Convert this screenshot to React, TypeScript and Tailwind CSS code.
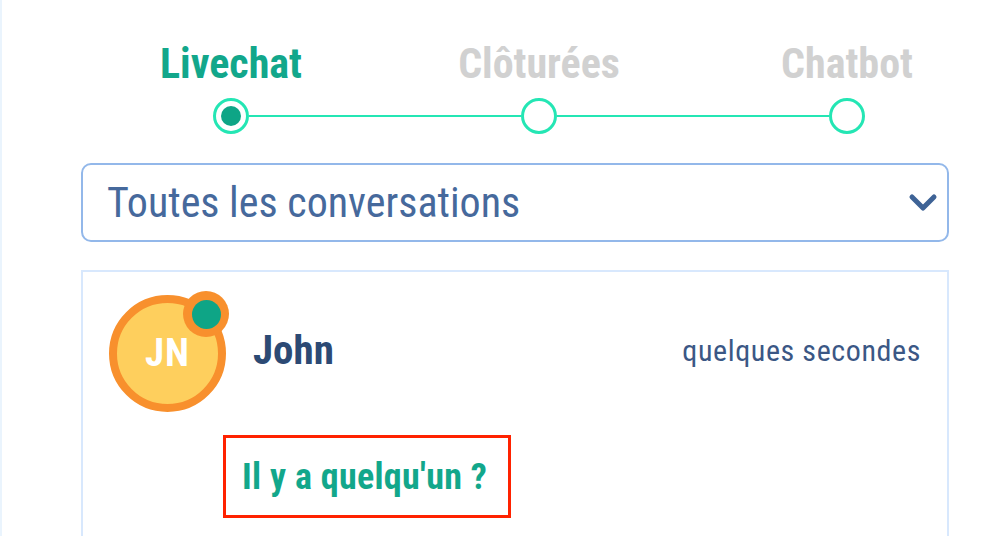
const FONT = "font-['Roboto_Condensed','Roboto',sans-serif] font-stretch-[75%]";

const STEPS = [
  { label: "Livechat", active: true },
  { label: "Clôturées", active: false },
  { label: "Chatbot", active: false },
];

function Step({ label, active }: { label: string; active: boolean }) {
  return (
    <div className="flex w-[36px] flex-col items-center">
      <div
        className={`whitespace-nowrap text-[42px] font-bold leading-[42px] ${
          active ? "text-[#12a78b]" : "text-[#d1d1d1]"
        }`}
      >
        {label}
      </div>
      <div className="mt-[13px] flex h-[36px] w-[36px] items-center justify-center rounded-full border-[3px] border-[#24e6b4] bg-white">
        {active && <div className="h-[20px] w-[20px] rounded-full bg-[#0ea586]" />}
      </div>
    </div>
  );
}

export default function App() {
  return (
    <div className={`h-[536px] w-[998px] overflow-hidden border-l-2 border-[#eaf4fd] bg-white ${FONT}`}>
      <div className="ml-[79px] w-[868px] pt-[43px]">
        <div className="ml-[132px] mr-[84px] flex">
          {STEPS.map((s, i) => (
            <div key={s.label} className={`flex items-end ${i > 0 ? "flex-1" : ""}`}>
              {i > 0 && <div className="mb-[17px] h-[2px] flex-1 bg-[#24e6b4]" />}
              <Step label={s.label} active={s.active} />
            </div>
          ))}
        </div>

        <div className="mt-[29px] flex h-[79px] items-center justify-between rounded-[10px] border-2 border-[#93b8ea] pl-[24px] pr-[9px]">
          <span className="text-[42px] leading-none text-[#46699c]">Toutes les conversations</span>
          <svg width="30" height="20" viewBox="0 0 30 20" fill="none">
            <path d="M4 4 L15 15 L26 4" stroke="#3e6396" strokeWidth="5" strokeLinecap="round" strokeLinejoin="round" />
          </svg>
        </div>

        <div className="mt-[28px] h-[300px] border-2 border-[#d8e8fd] px-[26px] pt-[23px]">
          <div className="flex items-center">
            <div className="relative h-[117px] w-[117px] shrink-0">
              <div className="flex h-full w-full items-center justify-center rounded-full border-[8px] border-[#f8902d] bg-[#fecf5d]">
                <span className="text-[39px] font-bold tracking-[1px] text-white">JN</span>
              </div>
              <div className="absolute left-[74px] top-[-4px] flex h-[46px] w-[46px] items-center justify-center rounded-full bg-[#f8902d]">
                <div className="h-[29px] w-[29px] rounded-full bg-[#0ea586]" />
              </div>
            </div>
            <div className="ml-[27px] mb-[6px] flex flex-1 items-center justify-between">
              <span className="text-[41px] font-bold text-[#2c4a74]">John</span>
              <span className="text-[30px] tracking-[0.6px] text-[#3b5785]">quelques secondes</span>
            </div>
          </div>
          <div className="ml-[114px] mt-[23px] flex h-[83px] w-[288px] items-center border-[3px] border-[#ff2200] px-[16px]">
            <span className="whitespace-nowrap text-[36px] font-bold tracking-[0.3px] text-[#12a78b]">Il y a quelqu'un ?</span>
          </div>
        </div>
      </div>
    </div>
  );
}
